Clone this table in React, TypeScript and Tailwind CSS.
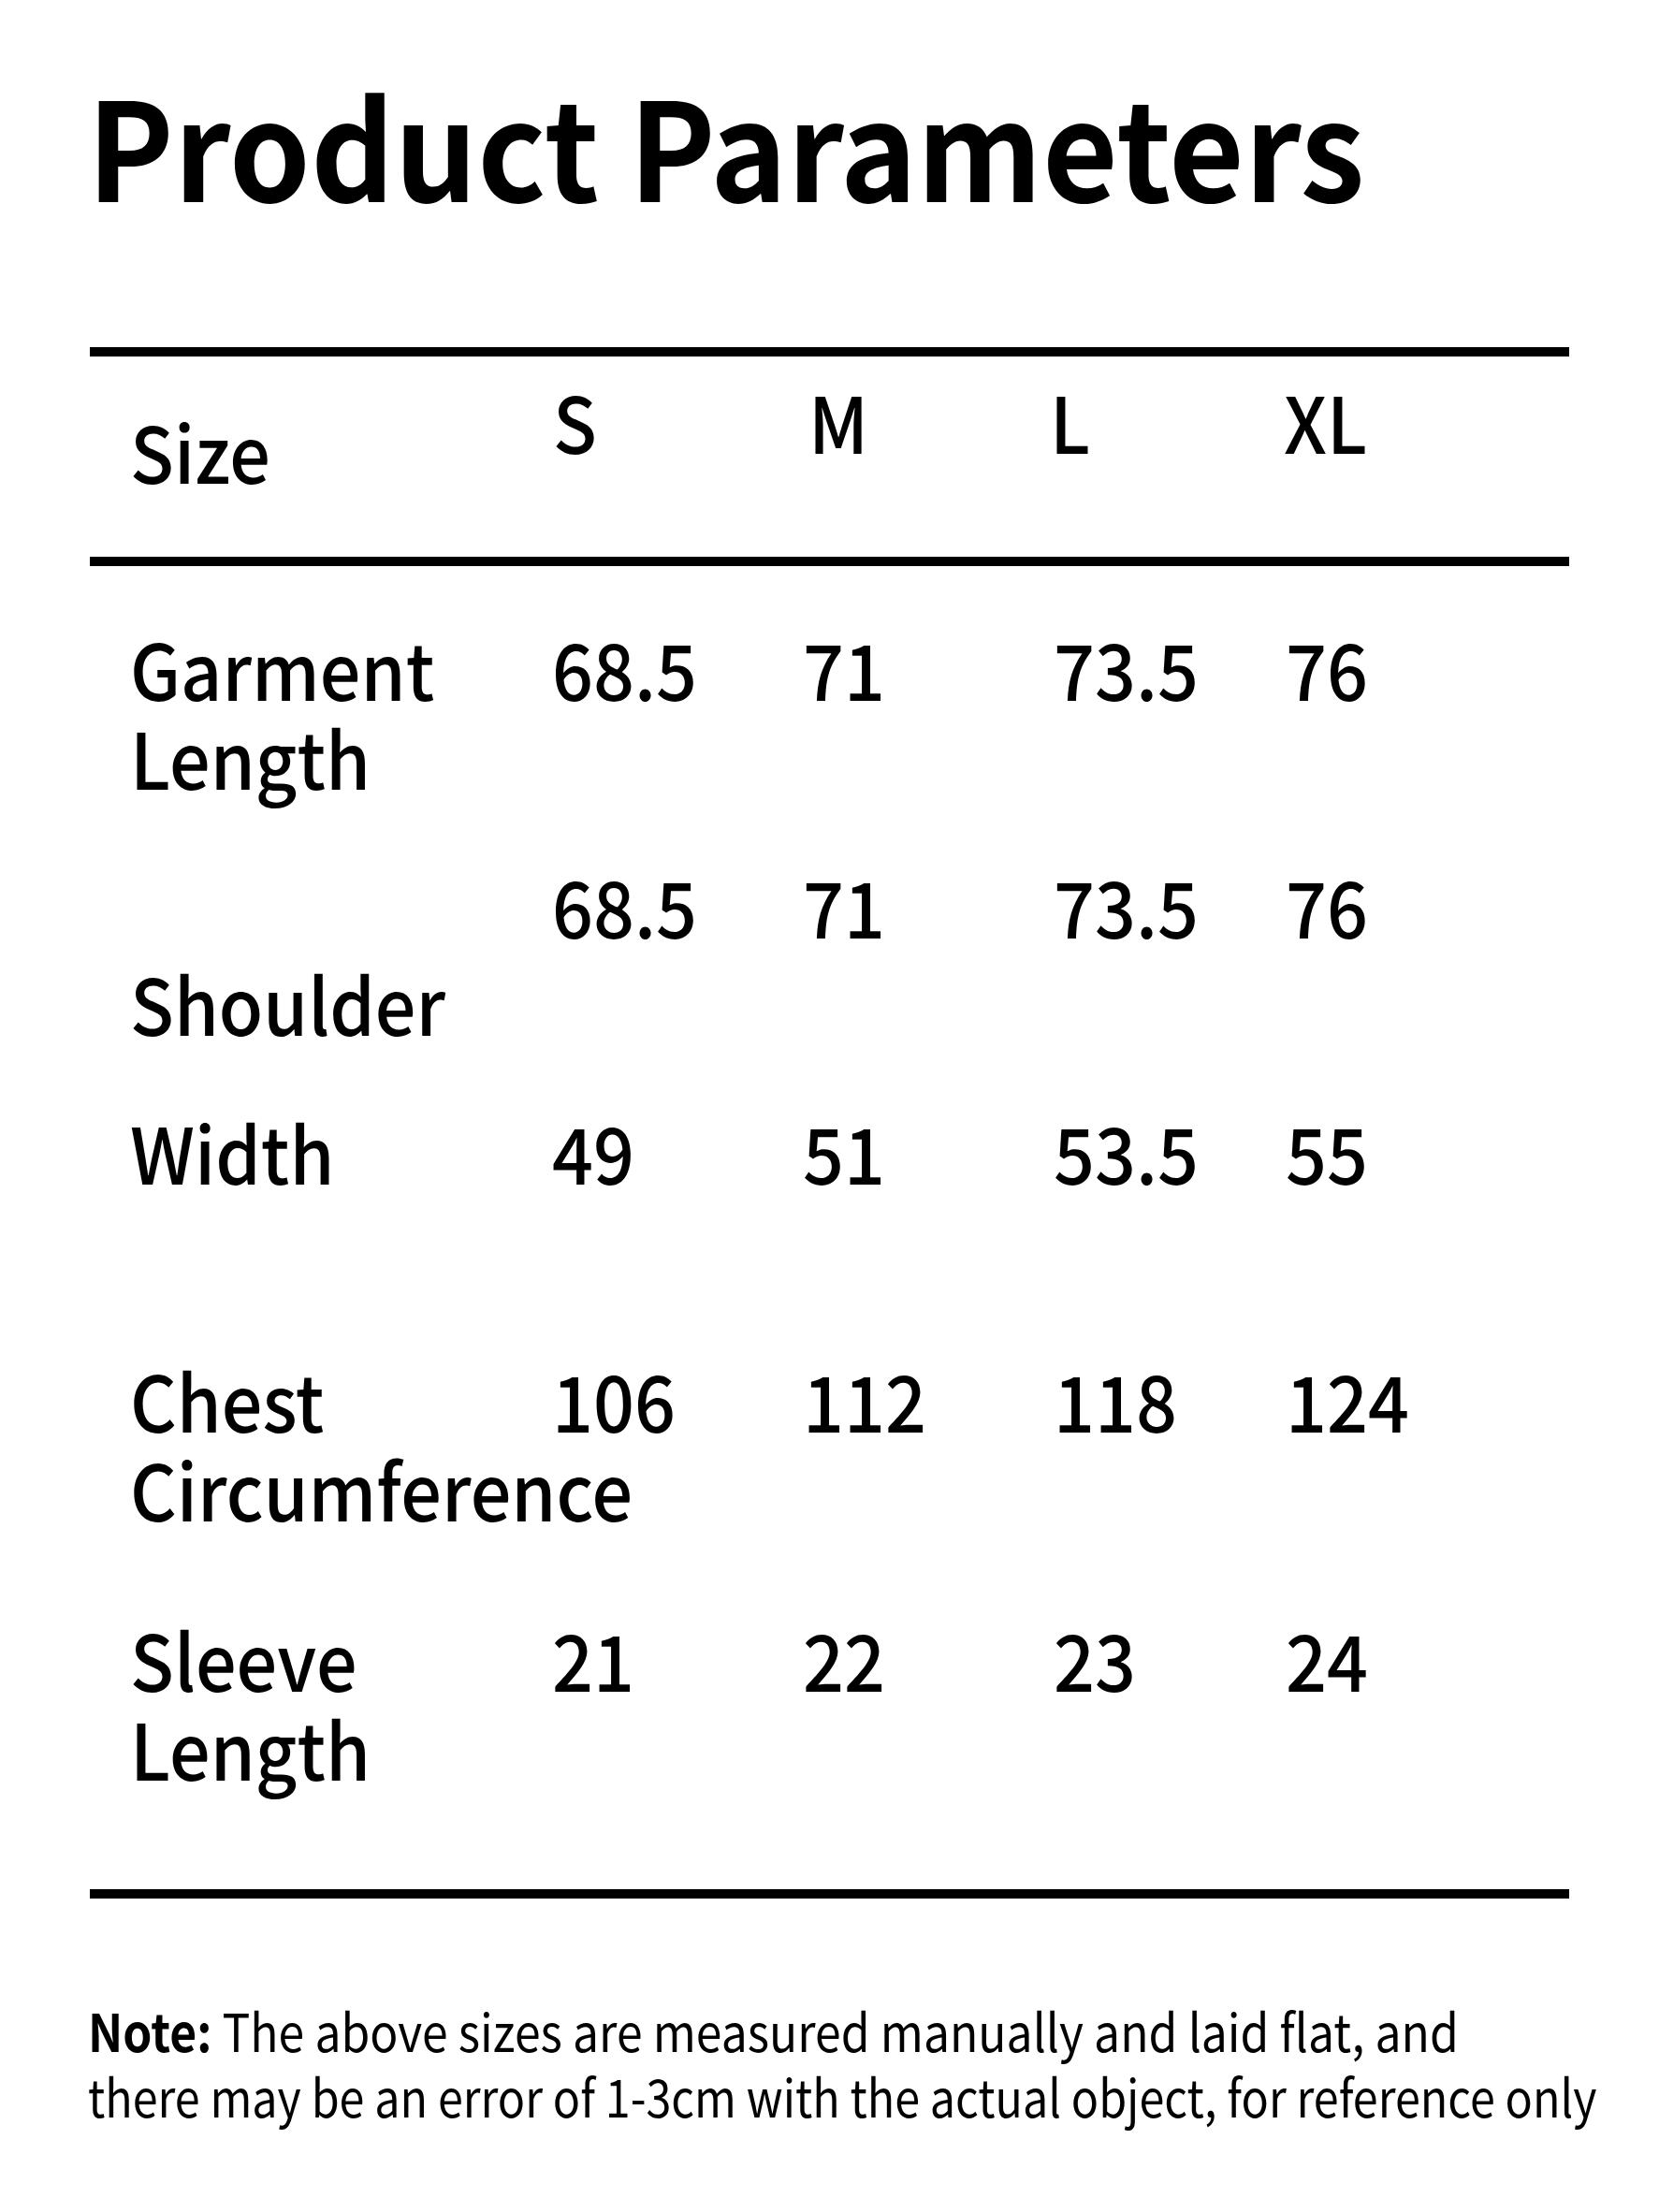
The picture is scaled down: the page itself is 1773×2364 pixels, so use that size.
const ROWS: { label: string[]; values: string[]; mt: string }[] = [
  { label: ['Garment', 'Length'], values: ['68.5', '71', '73.5', '76'], mt: 'mt-[61px]' },
  { label: [], values: ['68.5', '71', '73.5', '76'], mt: 'mt-[64px]' },
  { label: ['Shoulder'], values: [], mt: 'mt-[9px]' },
  { label: ['Width'], values: ['49', '51', '53.5', '55'], mt: 'mt-[64px]' },
  { label: ['Chest', 'Circumference'], values: ['106', '112', '118', '124'], mt: 'mt-[170px]' },
  { label: ['Sleeve', 'Length'], values: ['21', '22', '23', '24'], mt: 'mt-[87px]' },
]

const SIZES = ['S', 'M', 'L', 'XL']

export default function App() {
  return (
    <div
      className="w-[1773px] min-h-[2364px] overflow-hidden bg-white text-black pt-[80px] pb-[40px]"
      style={{ fontFamily: '"Noto Sans CJK SC", "Noto Sans", sans-serif' }}
    >
      {/* Title */}
      <h1 className="ml-[93px] text-[146px] leading-[146px] font-bold whitespace-nowrap origin-left scale-x-[0.953]">
        Product Parameters
      </h1>

      {/* Table */}
      <div className="mx-[96px] w-[1581px] mt-[145px] h-[10px] bg-black" />

      <div className="grid grid-cols-[452px_273px_258px_250px_1fr] items-start pl-[139px] mt-[21px] text-[83px] leading-[95px] font-medium">
        <div className="mt-[32px] origin-left scale-x-[0.93]">Size</div>
        {SIZES.map(s => (
          <div key={s} className="origin-left scale-x-[0.93]">{s}</div>
        ))}
      </div>

      <div className="mx-[96px] w-[1581px] mt-[66px] h-[10px] bg-black" />

      {ROWS.map((row, i) => (
        <div
          key={i}
          className={`grid grid-cols-[451px_268px_268px_248px_1fr] items-start pl-[139px] text-[83px] leading-[95px] font-medium ${row.mt}`}
        >
          <div className="whitespace-nowrap origin-left scale-x-[0.93]">
            {row.label.length === 0 ? <span>&nbsp;</span> : row.label.map(l => <div key={l}>{l}</div>)}
          </div>
          {row.values.map((v, j) => (
            <div key={j} className="origin-left scale-x-[0.93]">{v}</div>
          ))}
        </div>
      ))}

      <div className="mx-[96px] w-[1581px] mt-[104px] h-[10px] bg-black" />

      {/* Note */}
      <div className="ml-[94px] mt-[105px] text-[56px] leading-[70px] whitespace-nowrap">
        <p className="origin-left scale-x-[0.89]">
          <span className="font-bold">Note:</span> The above sizes are measured manually and laid flat, and
        </p>
        <p className="origin-left scale-x-[0.865]">
          there may be an error of 1-3cm with the actual object, for reference only
        </p>
      </div>
    </div>
  )
}
